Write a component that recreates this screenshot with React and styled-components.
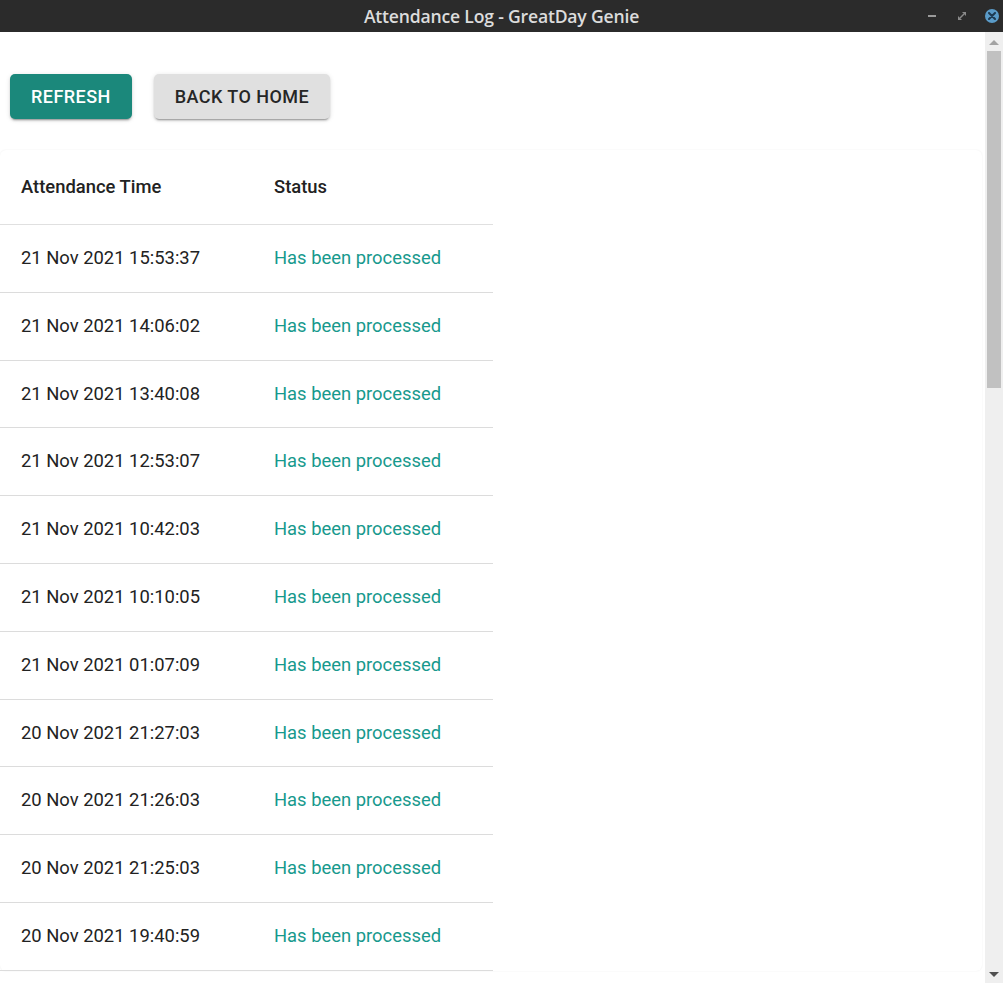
import React from "react"
import styled, { createGlobalStyle } from "styled-components"

const GlobalStyle = createGlobalStyle`
  html, body {
    margin: 0;
    padding: 0;
    overflow: hidden;
    background: #ffffff;
  }
  * {
    box-sizing: border-box;
  }
`

const rows = [
  "21 Nov 2021 15:53:37",
  "21 Nov 2021 14:06:02",
  "21 Nov 2021 13:40:08",
  "21 Nov 2021 12:53:07",
  "21 Nov 2021 10:42:03",
  "21 Nov 2021 10:10:05",
  "21 Nov 2021 01:07:09",
  "20 Nov 2021 21:27:03",
  "20 Nov 2021 21:26:03",
  "20 Nov 2021 21:25:03",
  "20 Nov 2021 19:40:59",
]

const Window = styled.div`
  width: 1003px;
  height: 983px;
  display: flex;
  flex-direction: column;
  overflow: hidden;
  font-family: Roboto, "Liberation Sans", sans-serif;
`

const TitleBar = styled.div`
  height: 32px;
  flex: none;
  display: grid;
  grid-template-columns: 1fr auto 1fr;
  align-items: center;
  background: #2b2b2b;
  color: #dcdcdc;
`

const Title = styled.div`
  grid-column: 2;
  font-family: "Open Sans", "DejaVu Sans", sans-serif;
  font-weight: 600;
  font-size: 17.6px;
  letter-spacing: -0.2px;
`

const Controls = styled.div`
  grid-column: 3;
  justify-self: end;
  display: flex;
  align-items: center;
  gap: 16px;
  padding-right: 4px;
`

const WindowButton = styled.div`
  width: 14px;
  height: 14px;
  display: flex;
  align-items: center;
  justify-content: center;
`

const CloseButton = styled(WindowButton)`
  border-radius: 50%;
  background: #5a9bc8;
`

const Body = styled.div`
  flex: 1;
  display: flex;
  min-height: 0;
`

const Content = styled.div`
  flex: 1;
  padding: 42px 3px 0 0;
  overflow: hidden;
`

const Toolbar = styled.div`
  display: flex;
  gap: 22px;
  padding-left: 10px;
`

const Button = styled.button`
  height: 45px;
  padding: 0 21px;
  border: none;
  border-radius: 5px;
  font-family: Roboto, "Liberation Sans", sans-serif;
  font-weight: 500;
  font-size: 18px;
  letter-spacing: 0.45px;
  text-transform: uppercase;
  background: ${(p) => (p.$primary ? "#1b887b" : "#e0e0e0")};
  color: ${(p) => (p.$primary ? "#ffffff" : "#262626")};
  box-shadow: 0 3px 1px -2px rgba(0, 0, 0, 0.2), 0 2px 2px 0 rgba(0, 0, 0, 0.14),
    0 1px 5px 0 rgba(0, 0, 0, 0.12);
`

const Paper = styled.div`
  margin-top: 31px;
  border-radius: 6px;
  background: #ffffff;
  box-shadow: 0 0 2px rgba(0, 0, 0, 0.07);
`

const Table = styled.table`
  width: 493px;
  border-collapse: collapse;
`

const HeadCell = styled.th`
  text-align: left;
  font-weight: 500;
  font-size: 18.4px;
  line-height: 25px;
  color: #222222;
  padding: 24px 21px 25px 21px;
  border-bottom: 1px solid #e0e0e0;
  width: ${(p) => p.$width || "auto"};
`

const Cell = styled.td`
  font-size: 18.4px;
  line-height: 24.8px;
  padding: 21px 21px 21px 21px;
  color: ${(p) => (p.$status ? "#17998d" : "#222222")};
  border-bottom: 1px solid #dcdcdc;
  white-space: nowrap;
`

const Scrollbar = styled.div`
  width: 18px;
  flex: none;
  background: #efefef;
  display: flex;
  flex-direction: column;
  align-items: center;
  padding: 8px 0 6px;
`

const Arrow = styled.div`
  width: 0;
  height: 0;
  border-left: 5px solid transparent;
  border-right: 5px solid transparent;
  ${(p) =>
    p.$down
      ? "border-top: 5px solid #505050;"
      : "border-bottom: 5px solid #a3a3a3;"}
`

const Thumb = styled.div`
  width: 14px;
  height: 337px;
  margin-top: 6px;
  background: #c1c1c1;
`

const Spacer = styled.div`
  flex: 1;
`

export default function App() {
  return (
    <Window>
      <GlobalStyle />
      <TitleBar>
        <Title>Attendance Log - GreatDay Genie</Title>
        <Controls>
          <WindowButton>
            <svg width="8" height="2" viewBox="0 0 8 2">
              <rect width="8" height="2" fill="#9a9a9a" />
            </svg>
          </WindowButton>
          <WindowButton>
            <svg width="8" height="8" viewBox="0 0 8 8">
              <path d="M4 0h4v4z M0 4v4h4z" fill="#8a8a8a" />
              <path d="M2 6L6 2" stroke="#8a8a8a" strokeWidth="1.4" />
            </svg>
          </WindowButton>
          <CloseButton>
            <svg width="8" height="8" viewBox="0 0 8 8">
              <path
                d="M1 1L7 7M7 1L1 7"
                stroke="#1d3a52"
                strokeWidth="2"
                strokeLinecap="round"
              />
            </svg>
          </CloseButton>
        </Controls>
      </TitleBar>
      <Body>
        <Content>
          <Toolbar>
            <Button $primary>Refresh</Button>
            <Button>Back to Home</Button>
          </Toolbar>
          <Paper>
            <Table>
              <thead>
                <tr>
                  <HeadCell $width="253px">Attendance Time</HeadCell>
                  <HeadCell>Status</HeadCell>
                </tr>
              </thead>
              <tbody>
                {rows.map((time) => (
                  <tr key={time}>
                    <Cell>{time}</Cell>
                    <Cell $status>Has been processed</Cell>
                  </tr>
                ))}
              </tbody>
            </Table>
          </Paper>
        </Content>
        <Scrollbar>
          <Arrow />
          <Thumb />
          <Spacer />
          <Arrow $down />
        </Scrollbar>
      </Body>
    </Window>
  )
}
